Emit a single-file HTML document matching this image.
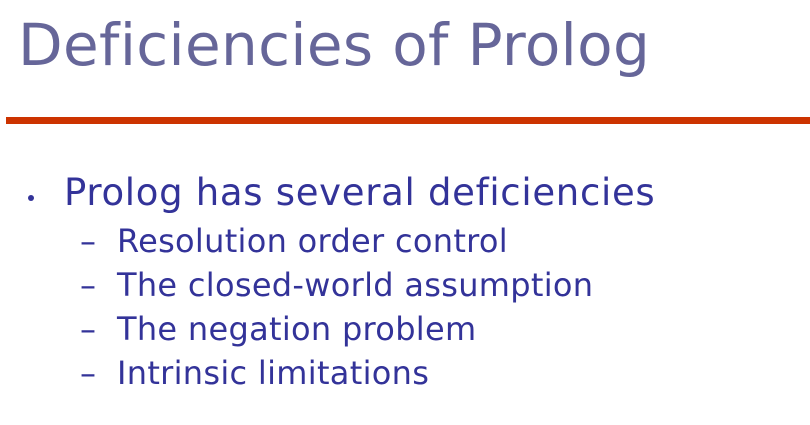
<!DOCTYPE html>
<html><head><meta charset="utf-8"><style>
body{margin:0;width:810px;height:425px;background:#fff;position:relative;overflow:hidden;font-family:"DejaVu Sans","Liberation Sans",sans-serif}
.t{position:absolute;left:18px;top:11px;font-size:58px;color:#666699;white-space:nowrap;letter-spacing:0.35px}
.bar{position:absolute;left:6px;top:117px;width:804px;height:7px;background:#cc3300}
.b{position:absolute;white-space:nowrap;color:#333399}
.l1{left:64px;top:171px;font-size:37px;letter-spacing:0.7px}
.dot{position:absolute;left:28px;top:195px;width:6px;height:6px;border-radius:50%;background:#333399}
.s{font-size:32px;left:80px;letter-spacing:0.3px}
.s span{display:inline-block;width:37px}
</style></head><body>
<div class="t">Deficiencies of Prolog</div>
<div class="bar"></div>
<div class="dot"></div>
<div class="b l1">Prolog has several deficiencies</div>
<div class="b s" style="top:222px"><span>–</span>Resolution order control</div>
<div class="b s" style="top:266px"><span>–</span>The closed-world assumption</div>
<div class="b s" style="top:310px"><span>–</span>The negation problem</div>
<div class="b s" style="top:354px"><span>–</span>Intrinsic limitations</div>
</body></html>
